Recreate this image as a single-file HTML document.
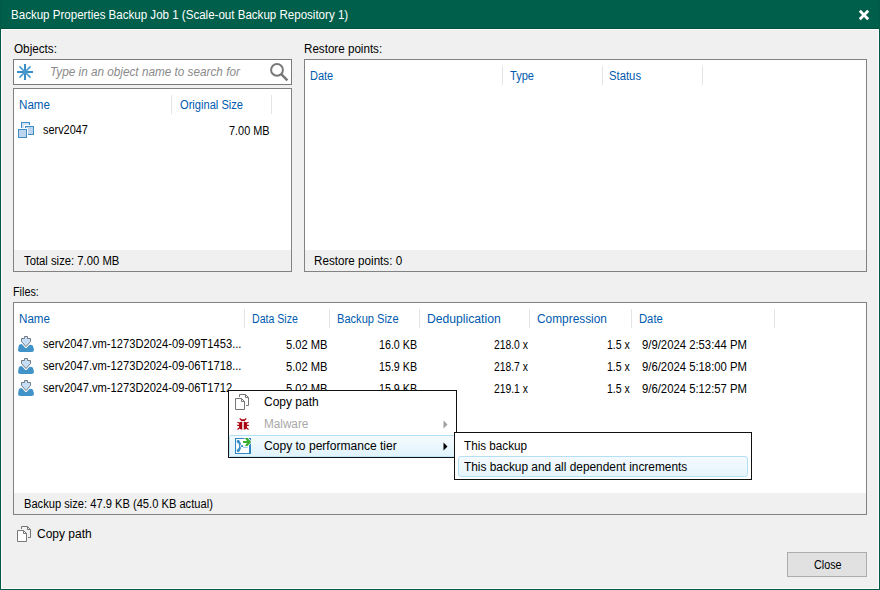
<!DOCTYPE html>
<html><head><meta charset="utf-8"><title>Backup Properties</title>
<style>
html,body{margin:0;padding:0;}
body{width:880px;height:590px;position:relative;overflow:hidden;background:#f0f0f0;font:12px/14px "Liberation Sans",sans-serif;}
.abs,.t,.ic,.box,.foot,.sep{position:absolute;}
.t{white-space:pre;transform-origin:0 0;display:block;}
.win{left:0;top:0;width:878px;height:588px;border:1px solid #005a47;border-top-color:#005f4b;}
.wininner{left:1px;top:29px;width:876px;height:558px;border:1px solid #fdfdfd;}
.title{left:0;top:0;width:880px;height:29px;background:#005f4b;}
.box{background:#fff;border:1px solid #828282;box-sizing:border-box;}
.foot{background:#f0f0f0;box-sizing:border-box;}
.sep{width:1px;height:19px;background:#e5e5e5;}
.menu{position:absolute;background:#fff;border:1px solid #111;box-sizing:border-box;}
.hl{position:absolute;background:#e6f4fc;border:1px solid #a8dcf5;box-sizing:border-box;}
</style></head><body>
<div class="abs title"></div><div class="abs" style="left:0;top:28px;width:880px;height:1px;background:#00523f"></div>
<div class="abs win"></div>
<div class="abs wininner"></div>
<svg class="ic" style="left:858px;top:9px" width="12" height="12" viewBox="0 0 12 12"><path d="M1.8 1.8 L10.2 10.2 M10.2 1.8 L1.8 10.2" stroke="#fff" stroke-width="2.8"/></svg>

<!-- search box -->
<div class="box" style="left:13px;top:59px;width:279px;height:26px;border-color:#7a7a7a"></div>
<svg class="ic" style="left:17px;top:64px" width="16" height="16" viewBox="0 0 16 16"><path d="M8 0 V16 M0 8 H16" stroke="#3a8ec7" stroke-width="2"/><path d="M2.4 2.4 L13.6 13.6 M13.6 2.4 L2.4 13.6" stroke="#4a9ad0" stroke-width="1.5"/></svg>
<svg class="ic" style="left:270px;top:63px" width="19" height="19" viewBox="0 0 19 19"><circle cx="7" cy="6.9" r="5.9" fill="none" stroke="#787878" stroke-width="2"/><path d="M11.2 11.1 L17.4 17.3" stroke="#787878" stroke-width="2.5"/></svg>

<!-- objects list -->
<div class="box" style="left:13px;top:88px;width:279px;height:184px"></div>
<div class="foot" style="left:14px;top:250px;width:277px;height:21px"></div>
<div class="sep" style="left:171px;top:95px"></div>
<div class="sep" style="left:271px;top:95px"></div>
<svg class="ic" style="left:18px;top:122px" width="16" height="16" viewBox="0 0 16 16">
<rect x="3.5" y="0.5" width="8" height="8" fill="#d3e2f4" stroke="#3c8fc6"/>
<rect x="6" y="3" width="11" height="11" fill="#fff"/>
<rect x="7.5" y="4.5" width="8" height="8" fill="#bfd5ee" stroke="#3c8fc6"/>
<rect x="-1" y="6" width="11" height="11" fill="#fff"/>
<rect x="0.5" y="7.5" width="8" height="8" fill="#bfd5ee" stroke="#3c8fc6"/>
</svg>

<!-- restore points -->
<div class="box" style="left:304px;top:59px;width:563px;height:213px"></div>
<div class="foot" style="left:305px;top:250px;width:561px;height:21px"></div>
<div class="sep" style="left:502px;top:66px"></div>
<div class="sep" style="left:602px;top:66px"></div>
<div class="sep" style="left:702px;top:66px"></div>

<!-- files -->
<div class="box" style="left:13px;top:302px;width:854px;height:213px"></div>
<div class="foot" style="left:14px;top:493px;width:852px;height:21px"></div>
<div class="sep" style="left:244px;top:309px"></div>
<div class="sep" style="left:329px;top:309px"></div>
<div class="sep" style="left:419px;top:309px"></div>
<div class="sep" style="left:529px;top:309px"></div>
<div class="sep" style="left:631px;top:309px"></div>
<div class="sep" style="left:774px;top:309px"></div>
<svg class="ic" style="left:18px;top:336px" width="16" height="16" viewBox="0 0 16 16">
<g fill="#4193c8"><circle cx="3.8" cy="11.3" r="3.3"/><circle cx="12.3" cy="11.9" r="3.1"/><rect x="0" y="11.4" width="16" height="4.6" rx="2.3"/><rect x="4" y="9.4" width="8" height="6"/></g>
<path d="M6.5 0.5 H9.5 V2.5 H12.5 V5.5 L8 10.6 L3.5 5.5 V2.5 H6.5 Z" fill="none" stroke="#fff" stroke-width="2.8" stroke-linejoin="round"/>
<path d="M6.5 0.5 H9.5 V2.5 H12.5 V5.5 L8 10.6 L3.5 5.5 V2.5 H6.5 Z" fill="#c6def5" stroke="#727a84" stroke-width="1"/>
</svg>
<svg class="ic" style="left:18px;top:358px" width="16" height="16" viewBox="0 0 16 16">
<g fill="#4193c8"><circle cx="3.8" cy="11.3" r="3.3"/><circle cx="12.3" cy="11.9" r="3.1"/><rect x="0" y="11.4" width="16" height="4.6" rx="2.3"/><rect x="4" y="9.4" width="8" height="6"/></g>
<path d="M6.5 0.5 H9.5 V2.5 H12.5 V5.5 L8 10.6 L3.5 5.5 V2.5 H6.5 Z" fill="none" stroke="#fff" stroke-width="2.8" stroke-linejoin="round"/>
<path d="M6.5 0.5 H9.5 V2.5 H12.5 V5.5 L8 10.6 L3.5 5.5 V2.5 H6.5 Z" fill="#c6def5" stroke="#727a84" stroke-width="1"/>
</svg>
<svg class="ic" style="left:18px;top:380px" width="16" height="16" viewBox="0 0 16 16">
<g fill="#4193c8"><circle cx="3.8" cy="11.3" r="3.3"/><circle cx="12.3" cy="11.9" r="3.1"/><rect x="0" y="11.4" width="16" height="4.6" rx="2.3"/><rect x="4" y="9.4" width="8" height="6"/></g>
<path d="M6.5 0.5 H9.5 V2.5 H12.5 V5.5 L8 10.6 L3.5 5.5 V2.5 H6.5 Z" fill="none" stroke="#fff" stroke-width="2.8" stroke-linejoin="round"/>
<path d="M6.5 0.5 H9.5 V2.5 H12.5 V5.5 L8 10.6 L3.5 5.5 V2.5 H6.5 Z" fill="#c6def5" stroke="#727a84" stroke-width="1"/>
</svg>

<svg class="ic" style="left:17px;top:526px" width="15" height="16" viewBox="0 0 15 16">
<path d="M4.5 3 V0.5 H10.5 L13.5 3.5 V11.5 H11" fill="none" stroke="#777" stroke-width="1"/>
<path d="M10.5 0.5 V3.5 H13.5" fill="none" stroke="#777" stroke-width="1"/>
<path d="M0.5 4.5 H6.5 L9.5 7.5 V15.5 H0.5 Z" fill="#fff" stroke="#777" stroke-width="1"/>
<path d="M6.5 4.5 V7.5 H9.5" fill="none" stroke="#777" stroke-width="1"/>
</svg>

<!-- close button -->
<div class="abs" style="left:787px;top:552px;width:80px;height:25px;box-sizing:border-box;background:#e1e1e1;border:1px solid #adadad"></div>

<span class="t" style="left:11.04px;top:8px;color:#fff;transform:scaleX(0.9628);">Backup Properties Backup Job 1 (Scale-out Backup Repository 1)</span>
<span class="t" style="left:14.00px;top:42px;color:#000;transform:scaleX(0.9767);">Objects:</span>
<span class="t" style="left:304.03px;top:42px;color:#000;transform:scaleX(0.9684);">Restore points:</span>
<span class="t" style="left:50.02px;top:65px;color:#8a8a8a;transform:scaleX(0.9793);font-style:italic;">Type in an object name to search for</span>
<span class="t" style="left:19.03px;top:98px;color:#005aae;transform:scaleX(0.9677);">Name</span>
<span class="t" style="left:180.00px;top:98px;color:#005aae;transform:scaleX(0.9265);">Original Size</span>
<span class="t" style="left:43.00px;top:123px;color:#000;transform:scaleX(0.9082);">serv2047</span>
<span class="t" style="left:229.00px;top:124px;color:#000;transform:scaleX(0.9091);">7.00 MB</span>
<span class="t" style="left:24.00px;top:254px;color:#000;transform:scaleX(0.9406);">Total size: 7.00 MB</span>
<span class="t" style="left:310.08px;top:69px;color:#005aae;transform:scaleX(0.9167);">Date</span>
<span class="t" style="left:510.00px;top:69px;color:#005aae;transform:scaleX(0.9231);">Type</span>
<span class="t" style="left:609.23px;top:69px;color:#005aae;transform:scaleX(0.9424);">Status</span>
<span class="t" style="left:314.22px;top:254px;color:#000;transform:scaleX(0.9718);">Restore points: 0</span>
<span class="t" style="left:13.10px;top:285px;color:#000;transform:scaleX(0.9000);">Files:</span>
<span class="t" style="left:19.03px;top:312px;color:#005aae;transform:scaleX(0.9677);">Name</span>
<span class="t" style="left:252.12px;top:312px;color:#005aae;transform:scaleX(0.8824);">Data Size</span>
<span class="t" style="left:337.08px;top:312px;color:#005aae;transform:scaleX(0.9231);">Backup Size</span>
<span class="t" style="left:426.99px;top:312px;color:#005aae;transform:scaleX(1.0141);">Deduplication</span>
<span class="t" style="left:537.01px;top:312px;color:#005aae;transform:scaleX(0.9895);">Compression</span>
<span class="t" style="left:639.06px;top:312px;color:#005aae;transform:scaleX(0.9375);">Date</span>
<span class="t" style="left:43.00px;top:337px;color:#000;transform:scaleX(0.9296);">serv2047.vm-1273D2024-09-09T1453...</span>
<span class="t" style="left:286.07px;top:338px;color:#000;transform:scaleX(0.9302);">5.02 MB</span>
<span class="t" style="left:379.27px;top:338px;color:#000;transform:scaleX(0.8913);">16.0 KB</span>
<span class="t" style="left:493.88px;top:338px;color:#000;transform:scaleX(0.8615);">218.0 x</span>
<span class="t" style="left:607.12px;top:338px;color:#000;transform:scaleX(0.8800);">1.5 x</span>
<span class="t" style="left:641.83px;top:338px;color:#000;transform:scaleX(0.9418);">9/9/2024 2:53:44 PM</span>
<span class="t" style="left:43.00px;top:359px;color:#000;transform:scaleX(0.9296);">serv2047.vm-1273D2024-09-06T1718...</span>
<span class="t" style="left:286.07px;top:360px;color:#000;transform:scaleX(0.9302);">5.02 MB</span>
<span class="t" style="left:379.27px;top:360px;color:#000;transform:scaleX(0.8913);">15.9 KB</span>
<span class="t" style="left:493.88px;top:360px;color:#000;transform:scaleX(0.8615);">218.7 x</span>
<span class="t" style="left:607.12px;top:360px;color:#000;transform:scaleX(0.8800);">1.5 x</span>
<span class="t" style="left:641.83px;top:360px;color:#000;transform:scaleX(0.9418);">9/6/2024 5:18:00 PM</span>
<span class="t" style="left:43.00px;top:381px;color:#000;transform:scaleX(0.9296);">serv2047.vm-1273D2024-09-06T1712...</span>
<span class="t" style="left:286.07px;top:382px;color:#000;transform:scaleX(0.9302);">5.02 MB</span>
<span class="t" style="left:379.27px;top:382px;color:#000;transform:scaleX(0.8913);">15.9 KB</span>
<span class="t" style="left:493.88px;top:382px;color:#000;transform:scaleX(0.8615);">219.1 x</span>
<span class="t" style="left:607.12px;top:382px;color:#000;transform:scaleX(0.8800);">1.5 x</span>
<span class="t" style="left:641.83px;top:382px;color:#000;transform:scaleX(0.9418);">9/6/2024 5:12:57 PM</span>
<span class="t" style="left:24.07px;top:497px;color:#000;transform:scaleX(0.9282);">Backup size: 47.9 KB (45.0 KB actual)</span>
<span class="t" style="left:37.00px;top:527px;color:#000;transform:scaleX(1.0000);">Copy path</span>
<span class="t" style="left:813.70px;top:558px;color:#000;transform:scaleX(0.8990);">Close</span>

<!-- context menu -->
<div class="menu" style="left:228px;top:390px;width:229px;height:68px"></div>
<div class="hl" style="left:229px;top:435px;width:227px;height:22px;background:linear-gradient(#f5fbfe,#e0f3fc);border-color:#b2e1f7 #b9e5f8 #bfe9fa #b9e5f8;border-radius:2px"></div>
<svg class="ic" style="left:235px;top:394px" width="15" height="16" viewBox="0 0 15 16">
<path d="M4.5 3 V0.5 H10.5 L13.5 3.5 V11.5 H11" fill="none" stroke="#777" stroke-width="1"/>
<path d="M10.5 0.5 V3.5 H13.5" fill="none" stroke="#777" stroke-width="1"/>
<path d="M0.5 4.5 H6.5 L9.5 7.5 V15.5 H0.5 Z" fill="#fff" stroke="#777" stroke-width="1"/>
<path d="M6.5 4.5 V7.5 H9.5" fill="none" stroke="#777" stroke-width="1"/>
</svg>
<svg class="ic" style="left:237px;top:418px" width="12" height="12" viewBox="0 0 12 12">
<g stroke="#a8000f" stroke-width="1.2" fill="none"><path d="M2.8 0.3 L4 2 M9.2 0.3 L8 2"/><path d="M2.9 5.3 L0.4 4.2 M2.9 7.4 H0.2 M2.9 9.6 L0.5 11.4 M9.1 5.3 L11.6 4.2 M9.1 7.4 H11.8 M9.1 9.6 L11.5 11.4"/></g>
<g fill="#a8000f"><path d="M3.3 1.3 H8.7 L7.8 3 H4.2 Z"/><path d="M2.1 4.9 Q3.6 3.6 5.3 3.9 V11.8 Q3 11.8 2.1 9.8 Z"/><path d="M9.9 4.9 Q8.4 3.6 6.7 3.9 V11.8 Q9 11.8 9.9 9.8 Z"/></g>
<rect x="5.3" y="3.4" width="1.4" height="8.6" fill="#ecc9cd"/>
</svg>
<svg class="ic" style="left:235px;top:438px;overflow:visible" width="16" height="16" viewBox="0 0 16 16">
<rect x="0.5" y="0.5" width="15" height="15" fill="#fff" stroke="#2f86c3"/>
<rect x="14" y="6.5" width="2" height="9" fill="#2f86c3"/>
<path d="M3 3 Q5.2 5.2 5.3 8 Q5.2 10.8 3 13" fill="none" stroke="#3b8fc9" stroke-width="2.3" stroke-linecap="round"/>
<circle cx="3.2" cy="3.4" r="1.5" fill="#3b8fc9"/><circle cx="3.2" cy="12.6" r="1.5" fill="#3b8fc9"/><circle cx="7" cy="8" r="1.9" fill="#fff"/><rect x="6.1" y="7.1" width="1.9" height="1.9" fill="#3b8fc9"/>
<path d="M8.2 9.3 H12.8" stroke="#7fb5dd" stroke-width="0.9"/>
<path d="M8 3 H11.9 L9.9 0 H12.6 L16.2 4 L12.6 8 H9.9 L11.9 5 H8 Z" fill="#fff" stroke="#fff" stroke-width="1.2"/><path d="M8 3 H11.9 L9.9 0 H12.6 L16.2 4 L12.6 8 H9.9 L11.9 5 H8 Z" fill="#3bb030"/>
</svg>
<svg class="ic" style="left:443px;top:420px" width="5" height="9" viewBox="0 0 5 9"><path d="M0.5 0.5 L4.5 4.5 L0.5 8.5 Z" fill="#a0a0a0"/></svg>
<svg class="ic" style="left:443px;top:442px" width="5" height="9" viewBox="0 0 5 9"><path d="M0.5 0.5 L4.5 4.5 L0.5 8.5 Z" fill="#000"/></svg>

<div class="menu" style="left:454px;top:432px;width:298px;height:48px"></div>
<div class="hl" style="left:458px;top:456px;width:290px;height:21px;border-radius:3px;background:linear-gradient(#f4fafe,#e7f5fd);border-color:#b3e0f6"></div>
<span class="t" style="left:264.00px;top:395px;color:#000;transform:scaleX(1.0000);">Copy path</span>
<span class="t" style="left:264.02px;top:417px;color:#a8a8a8;transform:scaleX(0.9773);">Malware</span>
<span class="t" style="left:263.99px;top:439px;color:#000;transform:scaleX(1.0053);">Copy to performance tier</span>
<span class="t" style="left:464.39px;top:439px;color:#000;transform:scaleX(0.9742);">This backup</span>
<span class="t" style="left:464.40px;top:460px;color:#000;transform:scaleX(0.9902);">This backup and all dependent increments</span>
</body></html>
